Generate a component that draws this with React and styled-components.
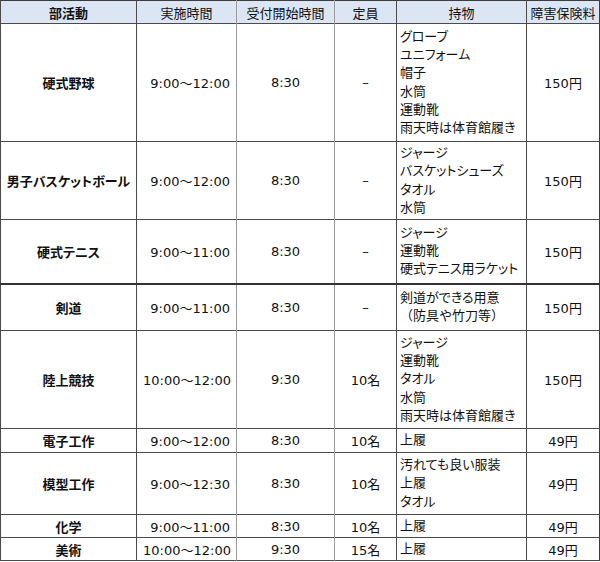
import React from 'react';
import styled, { createGlobalStyle } from 'styled-components';

const GlobalStyle = createGlobalStyle`
  body {
    margin: 0;
    background: #ffffff;
    font-family: 'DejaVu Sans', 'Noto Sans CJK JP', sans-serif;
    color: #111111;
  }
`;

const Table = styled.table`
  width: 599px;
  border-collapse: collapse;
  table-layout: fixed;
  font-size: 13px;
  font-feature-settings: 'palt';
  border: 1px solid #3c3c3c;
`;

const Row = styled.tr`
  height: ${(p) => p.$h}px;
  border-bottom: ${(p) => (p.$thick ? '2px solid #333333' : '1px solid #4a4a4a')};
`;

const HeadCell = styled.th`
  background: #dce5f3;
  font-weight: ${(p) => (p.$bold ? 700 : 400)};
  text-align: center;
  padding: 0;
  border-left: 1px solid ${(p) => (p.$light ? '#9a9a9a' : '#4a4a4a')};
  white-space: nowrap;
`;

const Cell = styled.td`
  padding: 0 6px;
  vertical-align: middle;
  white-space: nowrap;
  text-align: ${(p) => p.$align || 'center'};
  border-left: 1px solid ${(p) => (p.$light ? '#9a9a9a' : '#4a4a4a')};
`;

const NameCell = styled(Cell)`
  font-weight: 700;
  padding: 0 2px;
`;

const ItemCell = styled(Cell)`
  padding: 0 3px;
  text-align: left;
`;

const ItemList = styled.div`
  display: flex;
  flex-direction: column;
  line-height: 18.3px;
`;

const Item = styled.span`
  font-feature-settings: ${(p) => (p.$full ? 'normal' : "'palt'")};
`;

const rows = [
  { name: '硬式野球', time: '9:00～12:00', open: '8:30', cap: '–', items: ['グローブ', 'ユニフォーム', '帽子', '水筒', '運動靴', '雨天時は体育館履き'], fee: '150円', h: 118 },
  { name: '男子バスケットボール', time: '9:00～12:00', open: '8:30', cap: '–', items: ['ジャージ', 'バスケットシューズ', 'タオル', '水筒'], fee: '150円', h: 78 },
  { name: '硬式テニス', time: '9:00～11:00', open: '8:30', cap: '–', items: ['ジャージ', '運動靴', '硬式テニス用ラケット'], fee: '150円', h: 64, thick: true },
  { name: '剣道', time: '9:00～11:00', open: '8:30', cap: '–', items: ['剣道ができる用意', '（防具や竹刀等）'], fee: '150円', h: 47 },
  { name: '陸上競技', time: '10:00～12:00', open: '9:30', cap: '10名', items: ['ジャージ', '運動靴', 'タオル', '水筒', '雨天時は体育館履き'], fee: '150円', h: 98 },
  { name: '電子工作', time: '9:00～12:00', open: '8:30', cap: '10名', items: ['上履'], fee: '49円', h: 24 },
  { name: '模型工作', time: '9:00～12:30', open: '8:30', cap: '10名', items: ['汚れても良い服装', '上履', 'タオル'], fee: '49円', h: 62 },
  { name: '化学', time: '9:00～11:00', open: '8:30', cap: '10名', items: ['上履'], fee: '49円', h: 23 },
  { name: '美術', time: '10:00～12:00', open: '9:30', cap: '15名', items: ['上履'], fee: '49円', h: 23 },
];

export default function App() {
  return (
    <>
      <GlobalStyle />
      <Table>
        <colgroup>
          <col style={{ width: 136 }} />
          <col style={{ width: 100 }} />
          <col style={{ width: 98 }} />
          <col style={{ width: 62 }} />
          <col style={{ width: 130 }} />
          <col style={{ width: 73 }} />
        </colgroup>
        <thead>
          <Row $h={23}>
            <HeadCell $bold>部活動</HeadCell>
            <HeadCell>実施時間</HeadCell>
            <HeadCell $light>受付開始時間</HeadCell>
            <HeadCell $light>定員</HeadCell>
            <HeadCell>持物</HeadCell>
            <HeadCell>障害保険料</HeadCell>
          </Row>
        </thead>
        <tbody>
          {rows.map((r) => (
            <Row key={r.name} $h={r.h} $thick={r.thick}>
              <NameCell>{r.name}</NameCell>
              <Cell $align="right">{r.time}</Cell>
              <Cell $light>{r.open}</Cell>
              <Cell $light>{r.cap}</Cell>
              <ItemCell>
                <ItemList>
                  {r.items.map((it) => (
                    <Item key={it} $full={it.startsWith('（')}>
                      {it}
                    </Item>
                  ))}
                </ItemList>
              </ItemCell>
              <Cell>{r.fee}</Cell>
            </Row>
          ))}
        </tbody>
      </Table>
    </>
  );
}
